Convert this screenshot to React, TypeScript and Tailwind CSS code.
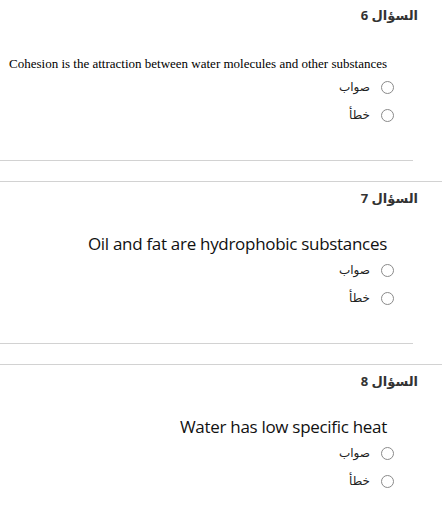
import React from "react";

type Q = { n: number; text: string; serif?: boolean };

const questions: Q[] = [
  { n: 6, text: "Cohesion is the attraction between water molecules and other substances", serif: true },
  { n: 7, text: "Oil and fat are hydrophobic substances" },
  { n: 8, text: "Water has low specific heat" },
];

const arabic = { fontFamily: '"Open Sans", "DejaVu Sans", sans-serif' };

function Option({ label }: { label: string }) {
  return (
    <div className="flex h-[28px] items-center gap-[11px] pr-[48px]">
      <span className="box-border block h-[13px] w-[13px] shrink-0 rounded-full border border-[#8a8a8a] bg-white" />
      <span className="text-[12px] leading-[18px] text-[#222]" style={arabic}>
        {label}
      </span>
    </div>
  );
}

function Card({ q, first }: { q: Q; first?: boolean }) {
  return (
    <section
      dir="rtl"
      className={
        first
          ? "border-t border-transparent pb-[20px]"
          : "border-t border-[#d2d2d2] pb-[20px]"
      }
    >
      <h3
        className="pr-[24px] pt-[6px] text-[13px] font-bold leading-[20px] text-[#333]"
        style={arabic}
      >
        السؤال {q.n}
      </h3>
      <div className="flex h-[48px] items-end pr-[55px]">
        {q.serif ? (
          <p
            dir="ltr"
            className="text-[13px] leading-[18px] text-black"
            style={{ fontFamily: '"Liberation Serif", serif' }}
          >
            {q.text}
          </p>
        ) : (
          <p
            dir="ltr"
            className="text-[17px] leading-[24px] tracking-[-0.3px] text-[#111]"
            style={{ fontFamily: '"Open Sans", sans-serif' }}
          >
            {q.text}
          </p>
        )}
      </div>
      <Option label="صواب" />
      <Option label="خطأ" />
      <div className="mr-[29px] mt-[31px] h-px bg-[#d2d2d2]" />
    </section>
  );
}

export default function App() {
  return (
    <div className="h-[517px] w-[442px] overflow-hidden bg-white">
      <div className="-mt-[2px]">
        {questions.map((q, i) => (
          <Card key={q.n} q={q} first={i === 0} />
        ))}
      </div>
    </div>
  );
}
